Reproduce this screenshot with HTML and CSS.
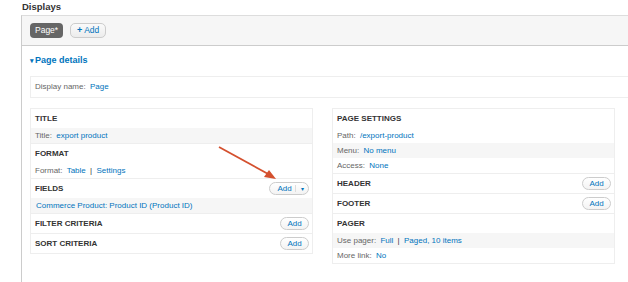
FILE: index.html
```html
<!DOCTYPE html>
<html lang="en">
<head>
    <meta charset="UTF-8">
    <title>Displays</title>
    <link rel="stylesheet" href="styles.css">
</head>
<body>
    <h2 class="heading">Displays</h2>
    <div class="displays">
        <div class="tabs">
            <span class="tab active">Page*</span>
            <span class="tab add"><b>+</b> Add</span>
        </div>
        <div class="details">
            <a class="summary"><span class="caret">&#9662;</span>Page details</a>
            <div class="name-row"><span class="label">Display name:</span> <a>Page</a></div>
            <div class="columns">
                <div class="col">
                    <div class="section">
                        <div class="head">TITLE</div>
                        <div class="row odd"><span class="label">Title:</span> <a>export product</a></div>
                    </div>
                    <div class="section">
                        <div class="head">FORMAT</div>
                        <div class="row"><span class="label">Format:</span> <a>Table</a> <span class="sep">|</span> &nbsp;<a>Settings</a></div>
                    </div>
                    <div class="section">
                        <div class="head">FIELDS
                            <span class="btn split"><span class="main">Add</span><span class="drop">&#9662;</span></span>
                        </div>
                        <div class="row odd"><a>Commerce Product: Product ID (Product ID)</a></div>
                    </div>
                    <div class="section">
                        <div class="head">FILTER CRITERIA <span class="btn">Add</span></div>
                    </div>
                    <div class="section">
                        <div class="head">SORT CRITERIA <span class="btn">Add</span></div>
                    </div>
                </div>
                <div class="col">
                    <div class="section">
                        <div class="head">PAGE SETTINGS</div>
                        <div class="row"><span class="label">Path:</span> <a>/export-product</a></div>
                        <div class="row odd"><span class="label">Menu:</span> <a>No menu</a></div>
                        <div class="row"><span class="label">Access:</span> <a>None</a></div>
                    </div>
                    <div class="section">
                        <div class="head">HEADER <span class="btn">Add</span></div>
                    </div>
                    <div class="section">
                        <div class="head">FOOTER <span class="btn">Add</span></div>
                    </div>
                    <div class="section">
                        <div class="head">PAGER</div>
                        <div class="row odd"><span class="label">Use pager:</span> <a>Full</a> <span class="sep">|</span> &nbsp;<a>Paged, 10 items</a></div>
                        <div class="row"><span class="label">More link:</span> <a>No</a></div>
                    </div>
                </div>
            </div>
        </div>
    </div>

    <!-- annotation arrow pointing at the fields Add button -->
    <svg class="arrow" width="628" height="282" viewBox="0 0 628 282">
        <line x1="219" y1="147" x2="270" y2="175" stroke="#d4502e" stroke-width="1.8"/>
        <polygon points="276,179 264,177 269,170" fill="#d4502e"/>
    </svg>
</body>
</html>
```

FILE: styles.css
```css
body { font-family: 'Liberation Sans', Arial, sans-serif; font-size: 8px; color: #333; margin: 0; background: #fff; position: relative; height: 282px; overflow: hidden; }
a { color: #0074bd; text-decoration: none; }
.heading { font-size: 9.5px; font-weight: bold; margin: 0 0 0 22px; height: 15px; line-height: 14px; color: #333; }
.displays { margin-left: 21px; border-left: 1px solid #ccc; border-top: 1px solid #ddd; height: 267px; }
.tabs { height: 29px; background: #f6f6f6; border-bottom: 1px solid #ccc; display: flex; align-items: center; gap: 7px; padding-left: 8px; }
.tab { height: 15px; line-height: 15px; border-radius: 4px; font-size: 8.5px; box-sizing: border-box; }
.tab.active { background: #666; color: #fff; width: 33px; padding-left: 5px; }
.tab.add { background: linear-gradient(#fafafa, #ececec); border: 1px solid #ccc; color: #0074bd; width: 36px; padding-left: 6px; line-height: 13px; border-radius: 5px; }
.tab.add b { font-size: 9px; }
.details { padding-left: 8px; }
.summary { display: block; font-size: 9px; font-weight: bold; line-height: 10px; padding-top: 9px; margin-bottom: 10px; }
.caret { font-size: 7px; margin-right: 1px; }
.name-row { border: 1px solid #eee; border-right: none; height: 20px; line-height: 20px; padding-left: 4px; }
.label { color: #666; margin-right: 2px; }
.columns { display: flex; gap: 19px; margin-top: 10px; align-items: flex-start; }
.col { width: 283px; border: 1px solid #eee; box-sizing: border-box; }
.section + .section { border-top: 1px solid #eee; }
.head { height: 19px; display: flex; align-items: center; justify-content: space-between; padding: 0 3px 0 4px; font-weight: bold; color: #333; }
.row { height: 15px; line-height: 15px; padding-left: 4px; }
.row.odd { background: #f6f6f6; }
.row > a:first-child { margin-left: 1px; }
.sep { color: #333; margin-left: 2px; }
.btn { font-weight: normal; color: #0074bd; border: 1px solid #ccc; border-radius: 7px; height: 13px; line-height: 12px; width: 29px; box-sizing: border-box; text-align: center; background: linear-gradient(#fff, #f3f3f3); }
.btn.split { width: 40px; display: flex; padding: 0; }
.btn.split .main { flex: 1; padding-left: 4px; }
.btn.split .drop { width: 12px; border-left: 1px solid #ddd; margin: 2px 0; line-height: 8px; font-size: 6px; }
.arrow { position: absolute; left: 0; top: 0; pointer-events: none; }
```
